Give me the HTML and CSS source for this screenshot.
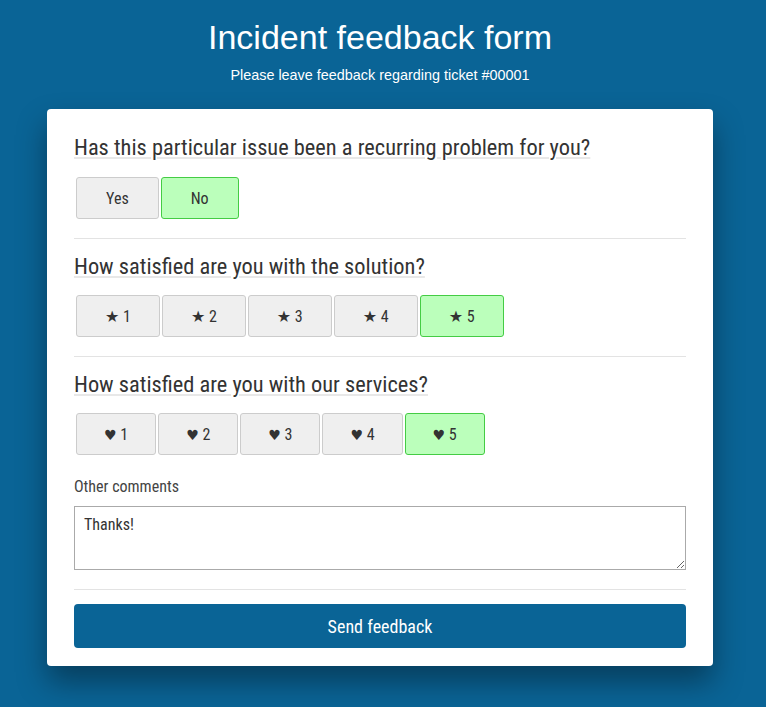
FILE: index.html
```html
<!DOCTYPE html>
<html>
<head>
<meta charset="utf-8">
<title>Incident feedback form</title>
<link rel="stylesheet" href="styles.css">
</head>
<body>
<div class="page">
  <header class="header">
    <h1 class="title">Incident feedback form</h1>
    <p class="subtitle">Please leave feedback regarding ticket #00001</p>
  </header>
  <form class="card">
    <section class="question">
      <h2 class="question-title">Has this particular issue been a recurring problem for you?</h2>
      <div class="choices">
        <button type="button" class="choice">Yes</button>
        <button type="button" class="choice selected">No</button>
      </div>
    </section>
    <hr class="divider">
    <section class="question">
      <h2 class="question-title">How satisfied are you with the solution?</h2>
      <div class="choices choices-stars">
        <button type="button" class="choice"><span class="star">★</span> 1</button>
        <button type="button" class="choice"><span class="star">★</span> 2</button>
        <button type="button" class="choice"><span class="star">★</span> 3</button>
        <button type="button" class="choice"><span class="star">★</span> 4</button>
        <button type="button" class="choice selected"><span class="star">★</span> 5</button>
      </div>
    </section>
    <hr class="divider">
    <section class="question">
      <h2 class="question-title">How satisfied are you with our services?</h2>
      <div class="choices choices-hearts">
        <button type="button" class="choice"><span class="heart">♥</span> 1</button>
        <button type="button" class="choice"><span class="heart">♥</span> 2</button>
        <button type="button" class="choice"><span class="heart">♥</span> 3</button>
        <button type="button" class="choice"><span class="heart">♥</span> 4</button>
        <button type="button" class="choice selected"><span class="heart">♥</span> 5</button>
      </div>
    </section>
    <label class="comment-label" for="comments">Other comments</label>
    <textarea id="comments" class="comment-box">Thanks!</textarea>
    <hr class="divider">
    <button type="submit" class="send">Send feedback</button>
  </form>
</div>
</body>
</html>
```
FILE: styles.css
```css
html, body {
  margin: 0;
  padding: 0;
}
body {
  background: #0a6496;
  min-height: 707px;
  font-family: "Roboto Condensed", Roboto, sans-serif;
  color: #333;
}
.page {
  width: 666px;
  margin: 0 0 0 47px;
}
.header {
  text-align: center;
  color: #fff;
  font-family: "Liberation Sans", Arial, sans-serif;
}
.title {
  margin: 0;
  padding-top: 17px;
  font-size: 34px;
  font-weight: normal;
  line-height: 41px;
}
.subtitle {
  margin: 9px 0 0;
  font-size: 14.4px;
  line-height: 17px;
}
.card {
  margin-top: 25px;
  background: #fff;
  border-radius: 4px;
  padding: 25px 27px 18px;
  box-shadow: 0 16px 30px rgba(0, 0, 0, 0.38);
  display: flex;
  flex-direction: column;
}
.question-title {
  margin: 0;
  font-size: 22.4px;
  font-weight: normal;
  line-height: 26px;
  color: #333;
  text-decoration: underline;
  text-decoration-color: #e8e8e8;
  text-decoration-thickness: 2px;
  text-underline-offset: 2px;
}
.choices {
  display: flex;
  gap: 2px;
  padding-left: 2px;
  margin-top: 16px;
}
.question:first-child .choices {
  margin-top: 17px;
}
.choice {
  height: 42px;
  padding: 0 29px;
  background: #efefef;
  border: 1px solid #ccc;
  border-radius: 3px;
  font-family: "Roboto Condensed", Roboto, sans-serif;
  font-size: 16px;
  color: #333;
}
.choices-stars .choice {
  padding: 0 28px;
}
.choices-hearts .choice {
  padding: 0 27px;
}
.choice.selected {
  background: #bbffbb;
  border-color: #4c4;
}
.star {
  font-family: "DejaVu Sans", sans-serif;
  font-size: 16px;
}
.heart {
  font-family: "DejaVu Sans", sans-serif;
  font-size: 14px;
}
.divider {
  margin: 19px 0 14px;
  border: 0;
  border-top: 1px solid #e3e3e3;
  height: 0;
}
.comment-label {
  margin-top: 22px;
  font-size: 16px;
  line-height: 19px;
  color: #444;
}
.comment-box {
  margin-top: 10px;
  height: 64px;
  box-sizing: border-box;
  padding: 8px 9px;
  border: 1px solid #aaa;
  font-family: "Roboto Condensed", Roboto, sans-serif;
  font-size: 16px;
  line-height: 19px;
  color: #333;
  resize: vertical;
}
.send {
  height: 44px;
  border: 0;
  border-radius: 4px;
  background: #0a6496;
  color: #fff;
  font-family: "Roboto Condensed", Roboto, sans-serif;
  font-size: 18px;
}
```
